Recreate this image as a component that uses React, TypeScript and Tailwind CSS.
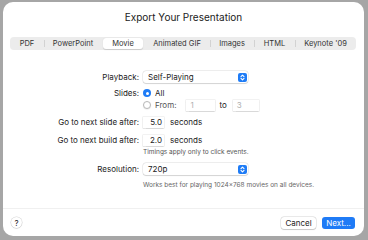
import React from 'react';

const tabs = [
  { label: 'PDF', w: 'w-[34px]' },
  { label: 'PowerPoint', w: 'w-[58px]' },
  { label: 'Movie', w: 'w-[42px]' },
  { label: 'Animated GIF', w: 'w-[66px]' },
  { label: 'Images', w: 'w-[44px]' },
  { label: 'HTML', w: 'w-[41px]' },
  { label: "Keynote '09", w: 'w-[61px]' },
];

function Stepper() {
  return (
    <div className="w-[9px] h-[9px] rounded-[2px] bg-[#1f7cf6] flex items-center justify-center">
      <svg width="5" height="7" viewBox="0 0 5 7" fill="none" stroke="white" strokeWidth="1.1" strokeLinecap="round" strokeLinejoin="round">
        <path d="M1 2.6 L2.5 1.1 L4 2.6" />
        <path d="M1 4.4 L2.5 5.9 L4 4.4" />
      </svg>
    </div>
  );
}

function Popup({ value }: { value: string }) {
  return (
    <div className="w-[105px] h-[12px] bg-white rounded-[3px] shadow-[0_0_0_0.5px_rgba(0,0,0,0.12),0_0.5px_1px_rgba(0,0,0,0.12)] flex items-center justify-between pl-[5px] pr-[1px]">
      <span>{value}</span>
      <Stepper />
    </div>
  );
}

function Field({ value, className, muted }: { value: string; className: string; muted?: boolean }) {
  return (
    <div className={`h-[11px] bg-white shadow-[0_0_0_0.5px_rgba(0,0,0,0.1),0_0.5px_1px_rgba(0,0,0,0.1)] flex items-center ${className} ${muted ? 'text-[#b0b0b0]' : ''}`}>
      {value}
    </div>
  );
}

export default function App() {
  return (
    <div className="w-[368px] h-[240px] bg-[#a6a6a6] pt-[2px] pl-[3px] pr-[4px] pb-[4px] font-['Inter',sans-serif] text-[#222]">
      <div className="w-full h-full bg-white rounded-[10px] flex flex-col">
        {/* Header */}
        <div className="h-[32px] flex items-center justify-center text-[10px] pb-[1px]">Export Your Presentation</div>

        <div className="ml-[7px] mr-[8px] mt-[3px] h-[13px] bg-[#ececec] rounded-[4px] flex items-center text-[7.5px] text-[#333]">
          {tabs.map((t, i) => {
            const active = t.label === 'Movie';
            const showSep = i > 0 && !active && tabs[i - 1].label !== 'Movie';
            return (
              <div key={t.label} className={`${t.w} h-full flex items-center relative`}>
                {showSep && <div className="absolute left-0 w-px h-[7px] bg-[#d2d2d2]" />}
                {active ? (
                  <div className="mx-[1px] flex-1 h-[11px] bg-white rounded-[3px] shadow-[0_0.5px_1px_rgba(0,0,0,0.15)] flex items-center justify-center">
                    {t.label}
                  </div>
                ) : (
                  <div className="flex-1 flex items-center justify-center">{t.label}</div>
                )}
              </div>
            );
          })}
        </div>

        {/* Content */}
        <div className="grid grid-cols-[136px_1fr] gap-x-[4px] text-[8px] mt-[21px]">
          <div className="h-[12px] flex items-center justify-end">Playback:</div>
          <Popup value="Self-Playing" />

          <div className="h-[12px] mt-[4px] flex items-center justify-end">Slides:</div>
          <div className="h-[12px] mt-[4px] flex items-center gap-[4px]">
            <div className="w-[8px] h-[8px] rounded-full bg-[#1f7cf6] flex items-center justify-center">
              <div className="w-[3px] h-[3px] rounded-full bg-white" />
            </div>
            <span>All</span>
          </div>

          <div className="h-[12px]" />
          <div className="h-[12px] flex items-center">
            <div className="w-[8px] h-[8px] rounded-full bg-white border-[0.5px] border-[#b8b8b8] shadow-[0_0.5px_1px_rgba(0,0,0,0.1)]" />
            <span className="ml-[4px] text-[#555]">From:</span>
            <Field value="1" muted className="ml-[10px] w-[29px] pl-[4px]" />
            <span className="ml-[4px]">to</span>
            <Field value="3" muted className="ml-[6px] w-[26px] pl-[4px]" />
          </div>

          <div className="h-[12px] mt-[5px] flex items-center justify-end">Go to next slide after:</div>
          <div className="h-[12px] mt-[5px] flex items-center">
            <Field value="5.0" className="w-[21px] justify-end pr-[2px]" />
            <span className="ml-[6px]">seconds</span>
          </div>

          <div className="h-[12px] mt-[6px] flex items-center justify-end">Go to next build after:</div>
          <div className="h-[12px] mt-[6px] flex items-center">
            <Field value="2.0" className="w-[21px] justify-end pr-[2px]" />
            <span className="ml-[6px]">seconds</span>
          </div>

          <div className="h-[9px] mt-[2px]" />
          <div className="h-[9px] mt-[2px] flex items-center text-[6.5px] text-[#555]">Timings apply only to click events.</div>

          <div className="h-[12px] mt-[6px] flex items-center justify-end">Resolution:</div>
          <div className="mt-[6px]">
            <Popup value="720p" />
          </div>

          <div className="h-[9px] mt-[6px]" />
          <div className="h-[9px] mt-[6px] flex items-center text-[6.5px] text-[#666]">Works best for playing 1024x768 movies on all devices.</div>
        </div>

        <div className="flex-1" />

        {/* Footer */}
        <div className="h-[28px] border-t border-[#f0f0f0] flex items-center justify-between pl-[8px] pr-[9px]">
          <div className="w-[11px] h-[11px] rounded-full bg-white shadow-[0_0_0_0.5px_rgba(0,0,0,0.15),0_0.5px_1px_rgba(0,0,0,0.15)] flex items-center justify-center text-[8px]">?</div>
          <div className="flex items-center gap-[6px] text-[8px]">
            <div className="w-[35px] h-[12px] rounded-[3px] bg-white shadow-[0_0_0_0.5px_rgba(0,0,0,0.15),0_0.5px_1px_rgba(0,0,0,0.15)] flex items-center justify-center">Cancel</div>
            <div className="w-[33px] h-[12px] rounded-[3px] bg-[#1f7bf6] text-white flex items-center justify-center">Next...</div>
          </div>
        </div>
      </div>
    </div>
  );
}
